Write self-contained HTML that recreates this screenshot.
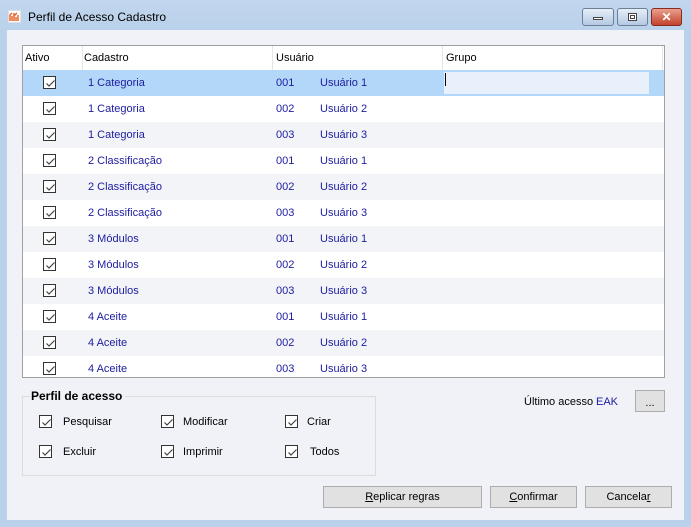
<!DOCTYPE html>
<html><head><meta charset="utf-8"><style>
*{margin:0;padding:0;box-sizing:border-box}
body{width:691px;height:527px;overflow:hidden;background:#b9d1ea;font-family:"Liberation Sans",sans-serif;font-size:11px;position:relative;color:#000}
.a{position:absolute}
.title{left:0;top:0;width:691px;height:30px;background:linear-gradient(#c2d6ee,#b9d1ea)}
.client{left:7px;top:30px;width:677px;height:490px;background:#f1f2f7}
.wb{top:8px;height:18px;border:1px solid #6b7f99;border-radius:3px;background:linear-gradient(#e6eef8,#b5c9e2)}
.grid{left:22px;top:45px;width:643px;height:333px;background:#fff;border:1px solid #a0a0a0;overflow:hidden}
.hdr{left:0;top:0;width:641px;height:24px;background:#fff}
.hdr span{position:absolute;top:6px;font-size:11px}
.sep{position:absolute;top:0;width:1px;height:24px;background:#e5e5e5}
.row{position:absolute;left:0;width:641px;height:26px}
.row span{position:absolute;top:7px;color:#1c1ca0;font-size:11px}
.cb{position:absolute;width:13px;height:13px;border:1px solid #333;background:#fff}
.cb svg{position:absolute;left:1px;top:1px}
.btn{position:absolute;border:1px solid #adadad;background:#e1e1e1;text-align:center;line-height:20px;font-size:11px}
</style></head><body>
<div class="a title"></div>
<div class="a" style="left:8px;top:10px;width:13px;height:13px;background:#fff;border:1px solid #e0e0e0">
<svg width="11" height="11" viewBox="0 0 11 11"><path d="M1 10V4L3 2M3 10V5M5 2V10M5 5L8 2M7 10V6M9 10V4" stroke="#e8642c" stroke-width="1.5" fill="none"/></svg></div>
<div class="a" style="left:28px;top:10px;font-size:12px">Perfil de Acesso Cadastro</div>
<div class="a wb" style="left:582px;width:32px"><div class="a" style="left:10px;top:8px;width:10px;height:3px;background:#fff;border:1px solid #444"></div></div>
<div class="a wb" style="left:617px;width:31px"><div class="a" style="left:10px;top:4px;width:9px;height:8px;border:1px solid #444;background:#fff"><div class="a" style="left:1px;top:1px;width:5px;height:4px;border:1px solid #444"></div></div></div>
<div class="a wb" style="left:651px;width:31px;background:linear-gradient(#e8a08c,#c4432c);border-color:#8a2a1e;color:#fff;text-align:center;font-weight:bold;font-size:12px;line-height:16px">✕</div>
<div class="a client"></div>

<div class="a grid">
<div class="a hdr">
<span style="left:2px">Ativo</span><div class="sep" style="left:59px"></div>
<span style="left:61px">Cadastro</span><div class="sep" style="left:249px"></div>
<span style="left:253px">Usuário</span><div class="sep" style="left:419px"></div>
<span style="left:423px">Grupo</span><div class="sep" style="left:639px"></div>
</div>
<div id="rows"></div>
</div>

<div class="a" style="left:22px;top:396px;width:354px;height:80px;border:1px solid #dcdcdc"></div>
<div class="a" style="left:30px;top:389px;background:#f1f2f7;padding:0 3px 0 1px;font-weight:bold;font-size:12px">Perfil de acesso</div>
<div id="perm"></div>

<div class="a" style="left:524px;top:396px">Último acesso</div>
<div class="a" style="left:596px;top:396px;color:#1c1ca0">EAK</div>
<div class="btn" style="left:635px;top:390px;width:30px;height:22px;line-height:24px">...</div>

<div class="btn" style="left:323px;top:486px;width:159px;height:22px"><u>R</u>eplicar regras</div>
<div class="btn" style="left:490px;top:486px;width:87px;height:22px"><u>C</u>onfirmar</div>
<div class="btn" style="left:585px;top:486px;width:87px;height:22px">Cancela<u>r</u></div>

<script>
var ck='<svg width="11" height="11" viewBox="0 0 11 11"><path d="M1.5 5.5L4 8L9.5 2.5" stroke="#444" stroke-width="1.2" fill="none"/></svg>';
var cad=["1 Categoria","1 Categoria","1 Categoria","2 Classificação","2 Classificação","2 Classificação","3 Módulos","3 Módulos","3 Módulos","4 Aceite","4 Aceite","4 Aceite"];
var h='';
for(var i=0;i<12;i++){var n=i%3+1;var bg=i==0?'#b3d7f8':(i%2==0?'#f3f4f8':'#fff');
h+='<div class="row" style="top:'+(24+i*26)+'px;background:'+bg+'"><div class="cb" style="left:20px;top:6px">'+ck+'</div><span style="left:65px">'+cad[i]+'</span><span style="left:253px">00'+n+'</span><span style="left:297px">Usuário '+n+'</span>'+(i==0?'<div style="position:absolute;left:421px;top:2px;width:205px;height:22px;background:#e8f1fb"><div style="position:absolute;left:1px;top:1px;width:1px;height:13px;background:#000"></div></div>':'')+'</div>';}
document.getElementById('rows').innerHTML=h;
var p=[["Pesquisar",39,415,63],["Modificar",161,415,183],["Criar",285,415,307],["Excluir",39,445,63],["Imprimir",161,445,183],["Todos",285,445,310]];
var q='';p.forEach(function(e){q+='<div class="cb" style="left:'+e[1]+'px;top:'+e[2]+'px">'+ck+'</div><div class="a" style="left:'+e[3]+'px;top:'+(e[2]+1)+'px">'+e[0]+'</div>';});
document.getElementById('perm').innerHTML=q;
</script>
</body></html>
